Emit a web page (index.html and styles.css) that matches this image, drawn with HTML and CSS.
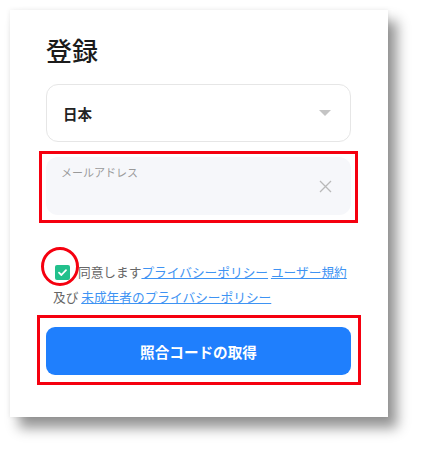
FILE: index.html
```html
<!DOCTYPE html>
<html lang="ja">
<head>
<meta charset="utf-8">
<title>登録</title>
<link rel="stylesheet" href="styles.css">
</head>
<body>
<div class="page">
  <div class="card">
    <h1 class="title">登録</h1>
    <div class="select">
      <span class="select-value">日本</span>
      <svg class="caret" width="12" height="6" viewBox="0 0 12 6"><path d="M0 0 H12 L6 6 Z" fill="#c4c4c4"/></svg>
    </div>
    <div class="mark-rect mark-field">
      <div class="field">
        <span class="field-label">メールアドレス</span>
        <svg class="clear" width="13" height="13" viewBox="0 0 13 13"><path d="M1 1 L12 12 M12 1 L1 12" stroke="#b9b9b9" stroke-width="1.3" fill="none"/></svg>
      </div>
    </div>
    <div class="agree">
      <span class="check-wrap">
        <span class="check"><svg width="15" height="15" viewBox="0 0 15 15"><path d="M4 7.6 L6.4 10 L11 5.2" stroke="#fff" stroke-width="1.8" fill="none" stroke-linecap="round" stroke-linejoin="round"/></svg></span>
        <span class="mark-circle"></span>
      </span><span class="plain">同意します</span><a class="link" href="#">プライバシーポリシー</a> <a class="link" href="#">ユーザー規約</a><br><span class="plain">及び</span> <a class="link" href="#">未成年者のプライバシーポリシー</a>
    </div>
    <div class="mark-rect mark-button">
      <button class="submit" type="button">照合コードの取得</button>
    </div>
  </div>
</div>
</body>
</html>
```
FILE: styles.css
```css
html, body {
  margin: 0;
  padding: 0;
  background: #ffffff;
}
body {
  font-family: "Noto Sans CJK JP", "Noto Sans", sans-serif;
}
.page {
  padding: 10px 0 32px 10px;
}
.card {
  width: 378px;
  height: 407px;
  box-sizing: border-box;
  background: #ffffff;
  padding: 22px 37px 0 36px;
  box-shadow: 9px 11px 12px rgba(0, 0, 0, 0.42), 0 0 5px rgba(0, 0, 0, 0.08);
}
.title {
  margin: 0;
  font-size: 26px;
  line-height: 36px;
  font-weight: 500;
  color: #1b1b1b;
}
.select {
  margin-top: 16px;
  height: 58px;
  box-sizing: border-box;
  border: 1px solid #e6e6e6;
  border-radius: 12px;
  display: flex;
  align-items: center;
  justify-content: space-between;
  padding: 0 19px 0 16px;
}
.select-value {
  font-size: 14.5px;
  font-weight: 700;
  color: #222;
}
.caret {
  display: block;
}
.mark-rect {
  border: 3px solid #f5000f;
}
.mark-field {
  margin: 9px -7px 0 -7px;
  padding: 3px 4px 5px 4px;
}
.field {
  height: 58px;
  border-radius: 12px;
  background: #f6f7fa;
  position: relative;
  padding: 8px 18px 0 15px;
  box-sizing: border-box;
}
.field-label {
  font-size: 11px;
  line-height: 14px;
  color: #9a9a9a;
  display: block;
}
.clear {
  position: absolute;
  right: 19px;
  top: 23px;
}
.agree {
  margin-top: 35.5px;
  padding-left: 7px;
  font-size: 12.7px;
  line-height: 25px;
  color: #666;
}
.check-wrap {
  position: relative;
  display: inline-block;
  width: 15px;
  height: 15px;
  margin: 0 8px 0 2px;
  vertical-align: -3px;
}
.check {
  display: block;
  width: 15px;
  height: 15px;
  border-radius: 2px;
  background: #22c08c;
}
.check svg {
  display: block;
}
.mark-circle {
  position: absolute;
  left: -14px;
  top: -18px;
  width: 32px;
  height: 33px;
  border: 3px solid #f5000f;
  border-radius: 50%;
}
.plain {
  color: #666;
}
.link {
  color: #3e93f3;
  text-decoration: underline;
}
.mark-button {
  margin: 6.5px -10px 0 -9px;
  padding: 9px 7px 7px 6px;
}
.submit {
  display: block;
  width: 100%;
  height: 48px;
  border: none;
  border-radius: 9px;
  background: #1f7ffd;
  color: #ffffff;
  font-family: "Noto Sans CJK JP", "Noto Sans", sans-serif;
  font-size: 14.6px;
  font-weight: 700;
}
```
